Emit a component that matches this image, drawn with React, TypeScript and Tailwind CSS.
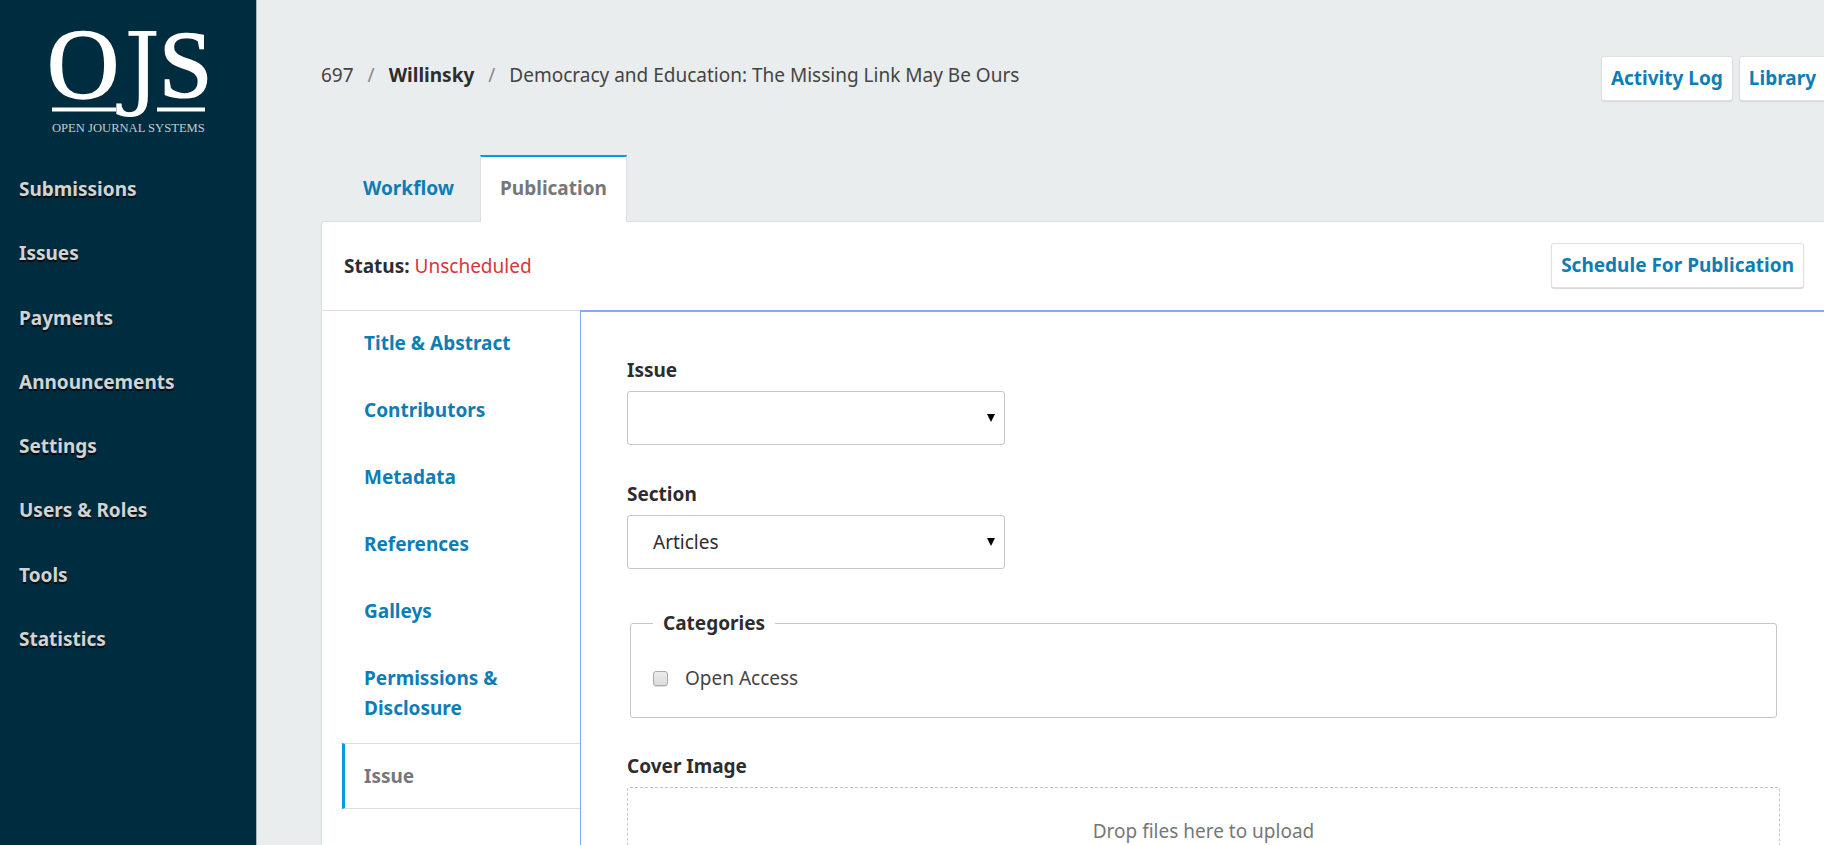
const navItems = ['Submissions', 'Issues', 'Payments', 'Announcements', 'Settings', 'Users & Roles', 'Tools', 'Statistics'];
const sections = ['Title & Abstract', 'Contributors', 'Metadata', 'References', 'Galleys', 'Permissions & Disclosure'];

function Logo() {
  return (
    <svg width="256" height="140" viewBox="0 0 256 140" role="img" aria-label="Open Journal Systems">
      <g fill="#fff">
        <g fontFamily="Liberation Serif, serif" stroke="#fff" strokeWidth="1.6">
          <text x="47" y="97" fontSize="100">O</text>
          <text x="159" y="97" fontSize="96">S</text>
        </g>
        <text x="124" y="98" fontSize="91" fontFamily="DejaVu Serif, serif">J</text>
        <path d="M52 107.500h64v4H52zM157 107.500h48v4h-48z" />
      </g>
      <text x="52" y="132" fontSize="12.6" fontFamily="Liberation Serif, serif" fill="#c3ccd1">OPEN JOURNAL SYSTEMS</text>
    </svg>
  );
}

function Button({ children }: { children: string }) {
  return (
    <button className="rounded-[3px] border border-[#dfe1e1] bg-white px-[9px] pt-[6px] pb-[7px] font-bold whitespace-nowrap text-[#0e7db5] shadow-[0_1px_1px_#d5d8d8]">
      {children}
    </button>
  );
}

function SelectField({ id, label, options }: { id: string; label: string; options: string[] }) {
  return (
    <div className="mb-[34px]">
      <label htmlFor={id} className="mb-[6px] block font-bold text-[#2d2d2d]">{label}</label>
      <div className="relative max-w-[378px]">
        <select id={id} className="h-[54px] w-full appearance-none rounded-[3px] border border-[#c6c6c6] bg-white pr-10 pl-[25px] text-[#2d2d2d]">
          {options.map((option) => <option key={option}>{option}</option>)}
        </select>
        <svg className="pointer-events-none absolute top-[23px] right-[10px]" width="8" height="8" viewBox="0 0 8 8">
          <path d="M0 0h8L4 8z" fill="#000" />
        </svg>
      </div>
    </div>
  );
}

export default function App() {
  return (
    <div className="flex h-screen overflow-hidden bg-[#e9eded] font-['Noto_Sans',sans-serif] text-[19px] leading-[30px] text-[#444]">
      <aside className="w-[257px] shrink-0 border-r border-[#a9b6bc] bg-[#002c40]">
        <Logo />
        <nav className="flex min-h-[530px] flex-col justify-between pt-[18px]">
          {navItems.map((item) => (
            <a key={item} href="#" className="px-[19px] py-4 font-bold text-[#cfd4d6] [text-shadow:0_2px_1px_#0b0b0b]">{item}</a>
          ))}
        </nav>
      </aside>

      <main className="-mr-0.5 flex min-w-0 flex-1 flex-col pl-16">
        <header className="flex items-start justify-between pt-14">
          <div className="flex pt-1">
            <span>697</span>
            <span className="px-[14px] text-[#888]">/</span>
            <span className="font-bold text-[#2d2d2d]">Willinsky</span>
            <span className="px-[14px] text-[#888]">/</span>
            <span>Democracy and Education: The Missing Link May Be Ours</span>
          </div>
          <div className="flex gap-[6px]">
            <Button>Activity Log</Button>
            <Button>Library</Button>
          </div>
        </header>

        <div role="tablist" className="relative z-10 mt-[54px] -mb-px flex pl-[22px]">
          <button role="tab" aria-selected="false" className="border-t-2 border-transparent px-5 pt-4 pb-[19px] font-bold text-[#0e7db5]">Workflow</button>
          <button role="tab" aria-selected="true" className="ml-[6px] border-x border-t-2 border-x-[#dddfdf] border-t-[#009de5] bg-white px-[19px] pt-4 pb-[19px] font-bold text-[#777]">Publication</button>
        </div>

        <section className="flex min-h-0 flex-1 flex-col rounded-tl-[3px] border-t border-l border-[#dddfdf] bg-white">
          <div className="flex items-center justify-between px-[22px] pt-[21px] pb-[22px]">
            <p>
              <strong className="text-[#2d2d2d]">Status:</strong> <span className="text-[#d5363c]">Unscheduled</span>
            </p>
            <Button>Schedule For Publication</Button>
          </div>

          <div className="flex min-h-0 flex-1">
            <nav className="flex w-[258px] shrink-0 flex-col border-t border-[#dddfdf] pl-5">
              {sections.map((section) => (
                <a key={section} href="#" className="pt-[17px] pr-10 pb-5 pl-[22px] font-bold text-[#0e7db5]">{section}</a>
              ))}
              <button className="border-y border-l-3 border-y-[#dddfdf] border-l-[#009de5] py-[17px] pl-[19px] text-left font-bold text-[#777]">Issue</button>
            </nav>

            <form className="min-w-0 flex-1 border-t-2 border-l border-[#80abf8] px-[46px] pt-[43px]">
              <SelectField id="issue" label="Issue" options={['']} />
              <SelectField id="section" label="Section" options={['Articles']} />
              <fieldset className="mx-[3px] mt-[39px] mb-[33px] rounded-[3px] border border-[#c6c6c6] px-[22px] pt-[25px] pb-6">
                <legend className="px-[10px] font-bold text-[#2d2d2d]">Categories</legend>
                <label className="flex items-center">
                  <input type="checkbox" className="mr-[17px] size-[15px] appearance-none rounded-[3px] border border-[#aaa] bg-linear-to-b from-[#ececec] to-[#dcdcdc] shadow-[0_1px_1px_#ddd]" />
                  Open Access
                </label>
              </fieldset>
              <h2 className="mb-[6px] font-bold text-[#2d2d2d]">Cover Image</h2>
              <div className="h-40 rounded-[3px] border border-dashed border-[#c6c6c6] pt-7 text-center text-[#777]">Drop files here to upload</div>
            </form>
          </div>
        </section>
      </main>
    </div>
  );
}
